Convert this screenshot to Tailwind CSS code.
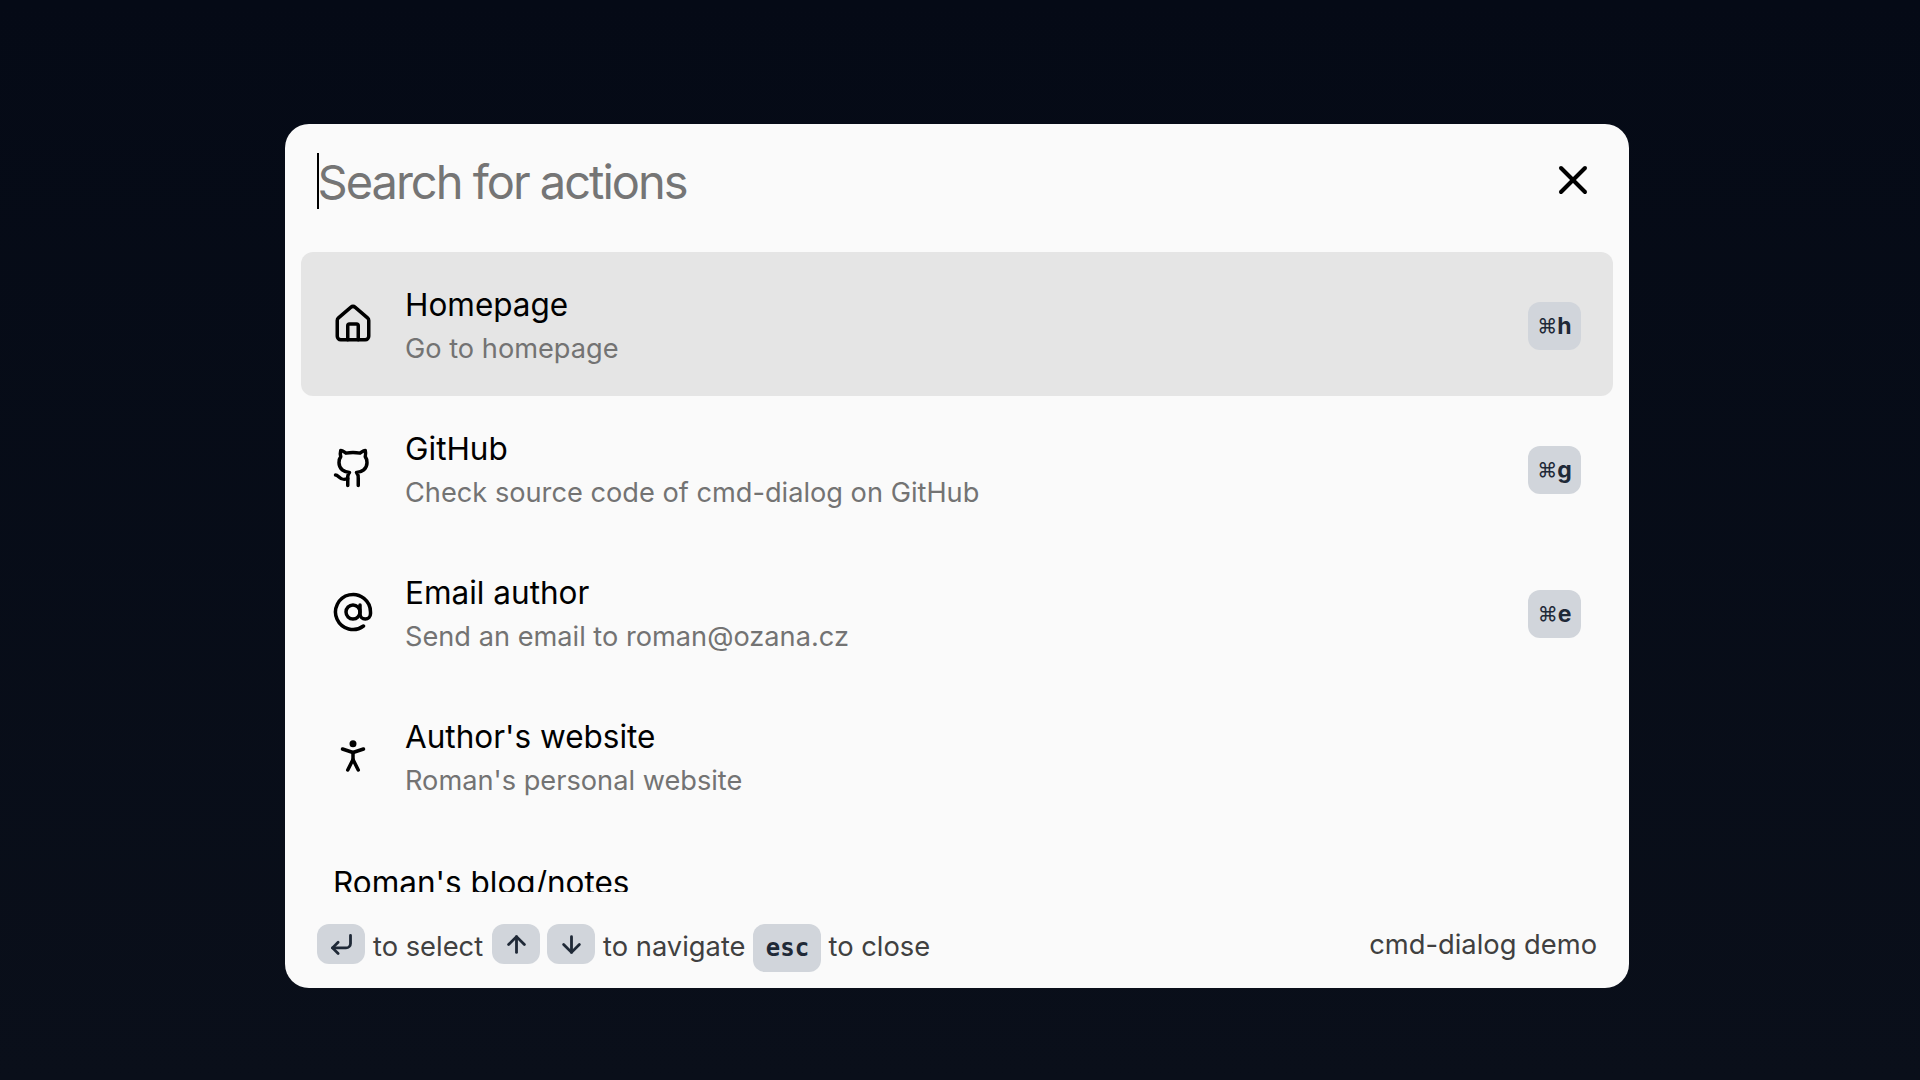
<!doctype html>
<html><head><meta charset="utf-8"><title>cmd-dialog demo</title>
<script src="https://cdn.jsdelivr.net/npm/@tailwindcss/browser@4"></script></head>
<body class="m-0 h-[1080px] w-[1920px] overflow-hidden bg-gradient-to-b from-[#050a16] to-[#0a0f1a] font-['Inter','Noto_Sans',sans-serif]">
<div class="flex h-full items-start justify-center pr-[6px] pt-[124px]">
<div class="flex h-[864px] w-[1344px] flex-col overflow-hidden rounded-[24px] bg-[#fafafa]">
  <div class="flex h-[128px] shrink-0 items-start justify-between pl-[32px] pr-[32px]">
    <div class="mt-[28px] flex items-center">
      <span class="h-[56px] w-[1.5px] bg-black"></span>
      <span class="-ml-[1px] pt-[2px] text-[47px] leading-[56px] tracking-[-2px] text-[#757575]">Search for actions</span>
    </div>
    <svg class="mt-[32px] h-[48px] w-[48px]" viewBox="0 0 24 24" fill="none" stroke="currentColor" stroke-width="2" stroke-linecap="round" stroke-linejoin="round"><path d="M18 6 6 18"/><path d="m6 6 12 12"/></svg>
  </div>
  <div class="flex h-[640px] flex-col overflow-hidden px-[16px]">
    <div class="flex h-[144px] shrink-0 items-center rounded-[12px] bg-[#e5e5e5] pl-[31px] pr-[32px]">
      <svg class="h-[42px] w-[42px] shrink-0" viewBox="0 0 24 24" fill="none" stroke="currentColor" stroke-width="2" stroke-linecap="round" stroke-linejoin="round"><path d="M15 21v-8a1 1 0 0 0-1-1h-4a1 1 0 0 0-1 1v8"/><path d="M3 10a2 2 0 0 1 .709-1.528l7-5.999a2 2 0 0 1 2.582 0l7 5.999A2 2 0 0 1 21 10v9a2 2 0 0 1-2 2H5a2 2 0 0 1-2-2z"/></svg>
      <div class="ml-[31px] flex-1 pt-[3px]"><div class="text-[31.5px] leading-[46px] text-black">Homepage</div><div class="text-[27.2px] leading-[42px] text-[#737373]">Go to homepage</div></div>
      <kbd class="mt-[4px] flex h-[48px] w-[53px] items-center justify-center rounded-[12px] bg-[#d1d5db] font-['Inter',sans-serif] text-[23px] font-bold text-[#1f2937]"><span class="text-[20px] font-normal">⌘</span>h</kbd>
    </div>
    <div class="flex h-[144px] shrink-0 items-center rounded-[12px] pl-[31px] pr-[32px]">
      <svg class="h-[42px] w-[42px] shrink-0" viewBox="0 0 24 24" fill="none" stroke="currentColor" stroke-width="2" stroke-linecap="round" stroke-linejoin="round"><path d="M15 22v-4a4.8 4.8 0 0 0-1-3.5c3 0 6-2 6-5.5.08-1.25-.27-2.48-1-3.5.28-1.15.28-2.35 0-3.5 0 0-1 0-3 1.5-2.64-.5-5.36-.5-8 0C6 2 5 2 5 2c-.3 1.15-.3 2.35 0 3.5A5.403 5.403 0 0 0 4 9c0 3.5 3 5.5 6 5.5-.39.49-.68 1.05-.85 1.65-.17.6-.22 1.23-.15 1.85v4"/><path d="M9 18c-4.51 2-5-2-7-2"/></svg>
      <div class="ml-[31px] flex-1 pt-[3px]"><div class="text-[31.5px] leading-[46px] text-black">GitHub</div><div class="text-[27.2px] leading-[42px] text-[#737373]">Check source code of cmd-dialog on GitHub</div></div>
      <kbd class="mt-[4px] flex h-[48px] w-[53px] items-center justify-center rounded-[12px] bg-[#d1d5db] font-['Inter',sans-serif] text-[23px] font-bold text-[#1f2937]"><span class="text-[20px] font-normal">⌘</span>g</kbd>
    </div>
    <div class="flex h-[144px] shrink-0 items-center rounded-[12px] pl-[31px] pr-[32px]">
      <svg class="h-[42px] w-[42px] shrink-0" viewBox="0 0 24 24" fill="none" stroke="currentColor" stroke-width="2" stroke-linecap="round" stroke-linejoin="round"><circle cx="12" cy="12" r="4"/><path d="M16 8v5a3 3 0 0 0 6 0v-1a10 10 0 1 0-4 8"/></svg>
      <div class="ml-[31px] flex-1 pt-[3px]"><div class="text-[31.5px] leading-[46px] text-black">Email author</div><div class="text-[27.2px] leading-[42px] text-[#737373]">Send an email to roman@ozana.cz</div></div>
      <kbd class="mt-[4px] flex h-[48px] w-[53px] items-center justify-center rounded-[12px] bg-[#d1d5db] font-['Inter',sans-serif] text-[23px] font-bold text-[#1f2937]"><span class="text-[20px] font-normal">⌘</span>e</kbd>
    </div>
    <div class="flex h-[144px] shrink-0 items-center rounded-[12px] pl-[31px] pr-[32px]">
      <svg class="h-[42px] w-[42px] shrink-0" viewBox="0 0 24 24" fill="none" stroke="currentColor" stroke-width="2" stroke-linecap="round" stroke-linejoin="round"><circle cx="12" cy="5" r="1"/><path d="m9 20 3-6 3 6"/><path d="m6 8 6 2 6-2"/><path d="M12 10v4"/></svg>
      <div class="ml-[31px] flex-1 pt-[3px]"><div class="text-[31.5px] leading-[46px] text-black">Author's website</div><div class="text-[27.2px] leading-[42px] text-[#737373]">Roman's personal website</div></div>
    </div>
    <div class="mt-[33px] shrink-0 pl-[32px] text-[31.5px] leading-[44px] text-black">Roman's blog/notes</div>
  </div>
  <div class="flex flex-1 items-start justify-between pl-[32px] pr-[32px] pt-[32px] text-[27.3px] text-[#404040]">
    <div class="flex items-start">
      <kbd class="flex h-[40px] w-[48px] items-center justify-center rounded-[12px] bg-[#d1d5db] text-[#1f2937]"><svg class="h-[27px] w-[27px]" viewBox="0 0 24 24" fill="none" stroke="currentColor" stroke-width="2.5" stroke-linecap="round" stroke-linejoin="round"><path d="M9 10 4 15 9 20"/><path d="M20 4v7a4 4 0 0 1-4 4H4"/></svg></kbd>
      <span class="ml-[8px] leading-[46px]">to select</span>
      <kbd class="ml-[9px] flex h-[40px] w-[48px] items-center justify-center rounded-[12px] bg-[#d1d5db] text-[#1f2937]"><svg class="h-[27px] w-[27px]" viewBox="0 0 24 24" fill="none" stroke="currentColor" stroke-width="2.5" stroke-linecap="round" stroke-linejoin="round"><path d="m5 12 7-7 7 7"/><path d="M12 19V5"/></svg></kbd>
      <kbd class="ml-[7px] flex h-[40px] w-[48px] items-center justify-center rounded-[12px] bg-[#d1d5db] text-[#1f2937]"><svg class="h-[27px] w-[27px]" viewBox="0 0 24 24" fill="none" stroke="currentColor" stroke-width="2.5" stroke-linecap="round" stroke-linejoin="round"><path d="M12 5v14"/><path d="m19 12-7 7-7-7"/></svg></kbd>
      <span class="ml-[8px] leading-[46px]">to navigate</span>
      <kbd class="ml-[8px] flex h-[48px] w-[68px] items-center justify-center rounded-[12px] bg-[#d1d5db] font-['DejaVu_Sans_Mono','Liberation_Mono',monospace] text-[24px] font-bold text-[#1f2937]">esc</kbd>
      <span class="ml-[7px] leading-[46px]">to close</span>
    </div>
    <span class="leading-[42px]">cmd-dialog demo</span>
  </div>
</div>
</div>
</body></html>
